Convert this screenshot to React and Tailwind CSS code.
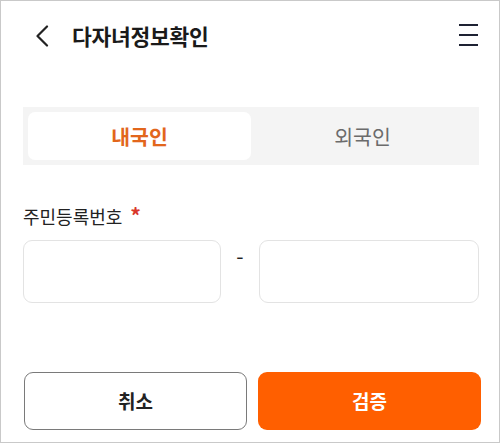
import React, { useState } from "react";

const font = { fontFamily: '"Noto Sans CJK KR", "Noto Sans", sans-serif' };

const BackIcon = () => (
  <svg width="14" height="22" viewBox="0 0 14 22" fill="none">
    <path d="M12 1.5L2.5 11L12 20.5" stroke="#222" strokeWidth="2.2" strokeLinecap="round" strokeLinejoin="round" />
  </svg>
);

const MenuIcon = () => (
  <svg width="19" height="22" viewBox="0 0 19 22" fill="none">
    <path d="M0 1h19M0 11h19M0 21h19" stroke="#1e2233" strokeWidth="2.2" />
  </svg>
);

export default function App() {
  const [tab, setTab] = useState("domestic");

  return (
    <div
      className="w-[500px] h-[443px] bg-white border border-[#c9c9c9] flex flex-col overflow-hidden"
      style={font}
    >
      {/* header */}
      <div className="h-[70px] flex items-center pl-[34px] pr-[21px]">
        <BackIcon />
        <h1 className="ml-[23px] text-[21.5px] font-bold text-[#1a1a1a] tracking-[-0.3px] leading-none">
          다자녀정보확인
        </h1>
        <div className="ml-auto -mt-[2px]">
          <MenuIcon />
        </div>
      </div>

      <div className="pl-[22px] pr-[20px] flex flex-col">
        {/* tabs */}
        <div className="mt-[36px] h-[58px] bg-[#f4f4f4] p-[5px] flex">
          <button
            onClick={() => setTab("domestic")}
            className={
              tab === "domestic"
                ? "flex-1 rounded-[7px] bg-white text-[#e2661c] font-bold text-[20.5px]"
                : "flex-1 rounded-[7px] text-[#6b6b6b] text-[20.5px]"
            }
          >
            내국인
          </button>
          <button
            onClick={() => setTab("foreign")}
            className={
              tab === "foreign"
                ? "flex-1 rounded-[7px] bg-white text-[#e2661c] font-bold text-[20.5px]"
                : "flex-1 rounded-[7px] text-[#6b6b6b] text-[20.5px]"
            }
          >
            외국인
          </button>
        </div>

        {/* label */}
        <div className="mt-[40px] flex items-center text-[18px] text-[#222] leading-none">
          주민등록번호
          <span className="ml-[8px] text-[#d9372b] font-bold text-[21px] leading-none">*</span>
        </div>

        {/* inputs */}
        <div className="mt-[14px] flex items-start">
          <input className="w-[198px] shrink-0 h-[63px] rounded-[9px] border border-[#e3e3e3] outline-none px-3" />
          <span className="w-[38px] shrink-0 text-center text-[21px] text-[#222] leading-none mt-[5px]">-</span>
          <input className="w-[220px] shrink-0 h-[63px] rounded-[9px] border border-[#e3e3e3] outline-none px-3" />
        </div>
      </div>

      {/* buttons */}
      <div className="mt-auto mb-[12px] pl-[23px] pr-[18px] flex gap-[11px]">
        <button className="w-[223px] shrink-0 h-[58px] rounded-[9px] border border-[#7a7a7a] bg-white text-[19px] font-bold text-[#222]">
          취소
        </button>
        <button className="w-[223px] shrink-0 h-[58px] rounded-[9px] bg-[#ff5f00] text-[19px] font-bold text-white">
          검증
        </button>
      </div>
    </div>
  );
}
